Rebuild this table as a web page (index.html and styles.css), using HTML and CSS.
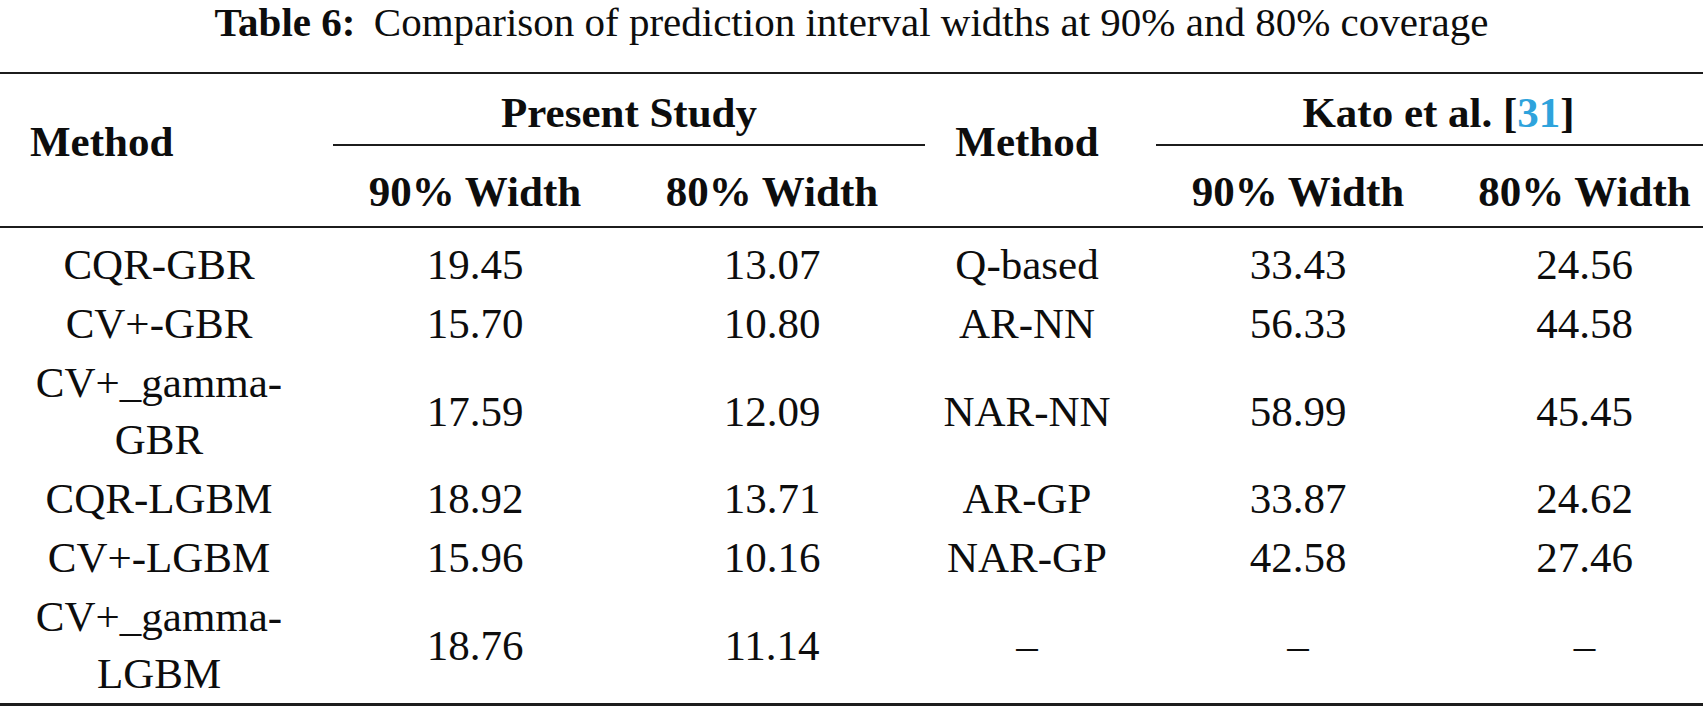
FILE: index.html
```html
<!DOCTYPE html>
<html lang="en">
<head>
<meta charset="utf-8">
<title>Table 6</title>
<link rel="stylesheet" href="styles.css">
</head>
<body>
<div class="caption"><strong class="cap-label">Table 6:</strong>Comparison of prediction interval widths at 90% and 80% coverage</div>
<table class="tbl">
  <colgroup>
    <col class="c1"><col class="c2"><col class="c3"><col class="c4"><col class="c5"><col class="c6">
  </colgroup>
  <thead>
    <tr class="hr1">
      <th rowspan="2" class="mh mh-left">Method</th>
      <th colspan="2" class="grp"><div class="grp-label grp-present">Present Study</div></th>
      <th rowspan="2" class="mh">Method</th>
      <th colspan="2" class="grp"><div class="grp-label grp-kato"><span class="kato-text">Kato et al. [<a class="ref" href="#">31</a>]</span></div></th>
    </tr>
    <tr class="hr2">
      <th>90% Width</th>
      <th>80% Width</th>
      <th>90% Width</th>
      <th class="last">80% Width</th>
    </tr>
  </thead>
  <tbody>
    <tr class="first"><td>CQR-GBR</td><td>19.45</td><td>13.07</td><td>Q-based</td><td>33.43</td><td class="last">24.56</td></tr>
    <tr><td>CV+-GBR</td><td>15.70</td><td>10.80</td><td>AR-NN</td><td>56.33</td><td class="last">44.58</td></tr>
    <tr><td>CV+_gamma-GBR</td><td>17.59</td><td>12.09</td><td>NAR-NN</td><td>58.99</td><td class="last">45.45</td></tr>
    <tr><td>CQR-LGBM</td><td>18.92</td><td>13.71</td><td>AR-GP</td><td>33.87</td><td class="last">24.62</td></tr>
    <tr><td>CV+-LGBM</td><td>15.96</td><td>10.16</td><td>NAR-GP</td><td>42.58</td><td class="last">27.46</td></tr>
    <tr class="end"><td>CV+_gamma-LGBM</td><td>18.76</td><td>11.14</td><td>–</td><td>–</td><td class="last">–</td></tr>
  </tbody>
</table>
</body>
</html>
```
FILE: styles.css
```css
html, body {
  margin: 0;
  padding: 0;
  background: #ffffff;
}

body {
  font-family: "Liberation Serif", "Times New Roman", serif;
  color: #0d0d0d;
  width: 1703px;
  height: 708px;
  overflow: hidden;
}

.caption {
  font-size: 41px;
  line-height: 44px;
  text-align: center;
  margin: 0 0 28px 0;
}

.cap-label {
  font-weight: 700;
  margin-right: 0.45em;
}

.tbl {
  width: 1703px;
  table-layout: fixed;
  border-collapse: separate;
  border-spacing: 0;
  font-size: 43px;
  line-height: 57px;
}

.c1 { width: 318px; }
.c2 { width: 314px; }
.c3 { width: 280px; }
.c4 { width: 230px; }
.c5 { width: 312px; }
.c6 { width: 249px; }

.tbl th {
  font-weight: 700;
  text-align: center;
  white-space: nowrap;
}

.hr1 th {
  border-top: 2px solid #1c1c1c;
  padding: 0;
}

.mh {
  vertical-align: middle;
  border-bottom: 2px solid #1c1c1c;
  padding-bottom: 18px !important;
}

.mh-left {
  text-align: left !important;
  padding-left: 30px !important;
}

.grp {
  vertical-align: bottom;
}

.grp-label {
  padding: 10px 0 3px 0;
  border-bottom: 2px solid #1c1c1c;
}

.grp-present {
  margin: 0 -13px 0 15px;
  text-align: center;
}

.grp-kato {
  margin: 0 0 0 14px;
  text-align: center;
}

.kato-text {
  padding-left: 18px;
}

.ref {
  color: #2ea3dc;
  text-decoration: none;
}

.hr2 th {
  padding: 17px 0 6px 0;
  border-bottom: 2px solid #1c1c1c;
}

.tbl td {
  text-align: center;
  vertical-align: middle;
  padding: 1px 0;
}

.tbl .last {
  padding-left: 12px;
}

.tbl tr.first td {
  padding-top: 8px;
}

.tbl tr.end td {
  border-bottom: 3px solid #1c1c1c;
}
```
